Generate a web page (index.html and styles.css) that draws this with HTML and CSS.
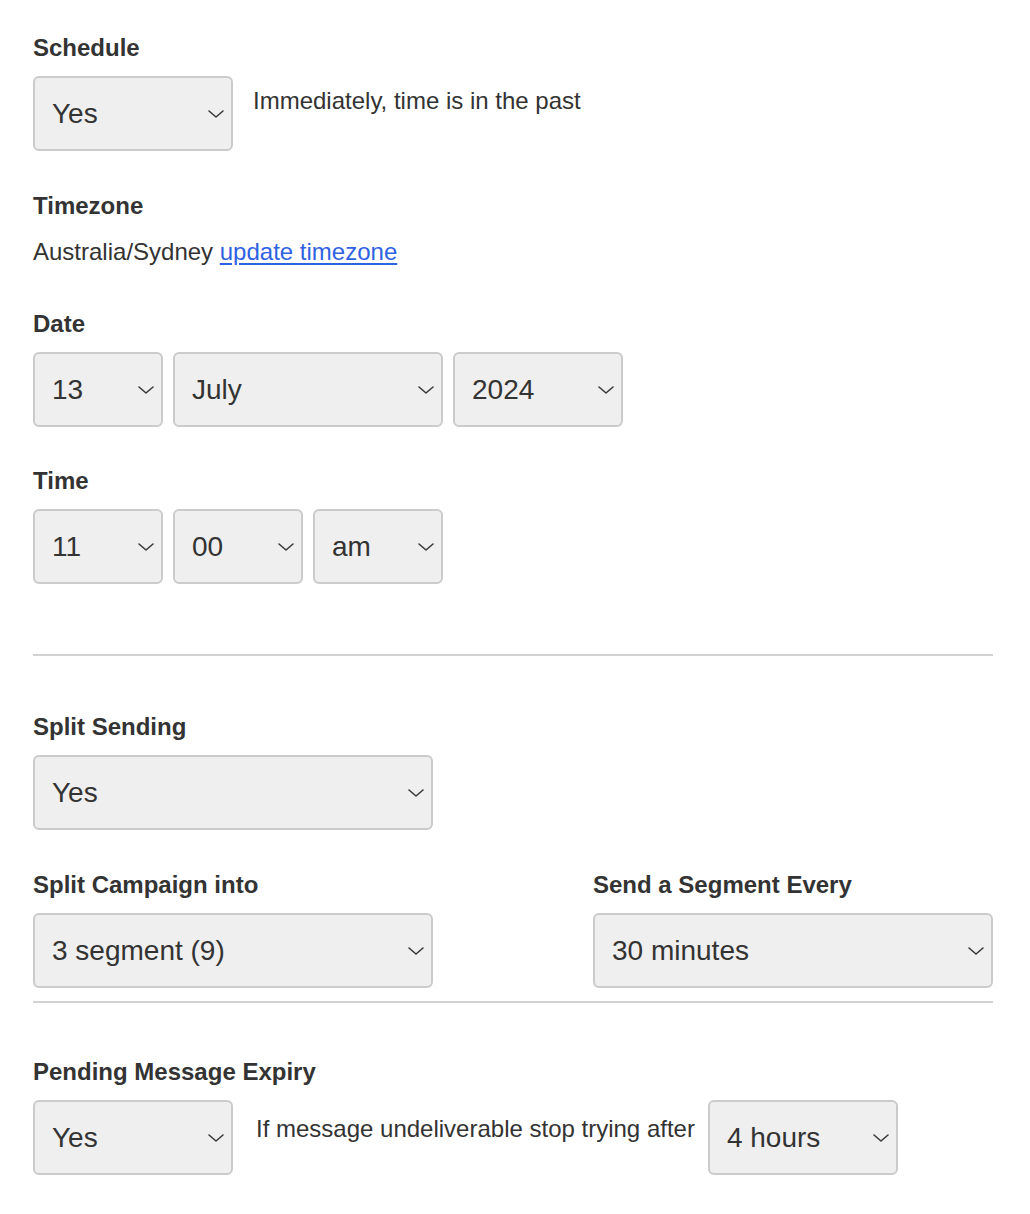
FILE: index.html
```html
<!DOCTYPE html>
<html lang="en">
<head>
<meta charset="utf-8">
<title>Schedule</title>
<link rel="stylesheet" href="styles.css">
</head>
<body>
<main class="form">
  <section class="field field--first">
    <label class="label" for="schedule">Schedule</label>
    <div class="row">
      <div class="select-wrap w200">
        <select id="schedule" class="select"><option>Yes</option><option>No</option></select>
        <svg class="chev" viewBox="0 0 16 8" aria-hidden="true"><path d="M1 1 L8 7 L15 1"/></svg>
      </div>
      <span class="note note--schedule">Immediately, time is in the past</span>
    </div>
  </section>

  <section class="field field--tz">
    <div class="label">Timezone</div>
    <p class="tz">Australia/Sydney <a href="#" class="link">update timezone</a></p>
  </section>

  <section class="field field--date">
    <div class="label">Date</div>
    <div class="row row--gap">
      <div class="select-wrap w130">
        <select class="select"><option>13</option></select>
        <svg class="chev" viewBox="0 0 16 8" aria-hidden="true"><path d="M1 1 L8 7 L15 1"/></svg>
      </div>
      <div class="select-wrap w270">
        <select class="select"><option>July</option></select>
        <svg class="chev" viewBox="0 0 16 8" aria-hidden="true"><path d="M1 1 L8 7 L15 1"/></svg>
      </div>
      <div class="select-wrap w170">
        <select class="select"><option>2024</option></select>
        <svg class="chev" viewBox="0 0 16 8" aria-hidden="true"><path d="M1 1 L8 7 L15 1"/></svg>
      </div>
    </div>
  </section>

  <section class="field field--time">
    <div class="label">Time</div>
    <div class="row row--gap">
      <div class="select-wrap w130">
        <select class="select"><option>11</option></select>
        <svg class="chev" viewBox="0 0 16 8" aria-hidden="true"><path d="M1 1 L8 7 L15 1"/></svg>
      </div>
      <div class="select-wrap w130">
        <select class="select"><option>00</option></select>
        <svg class="chev" viewBox="0 0 16 8" aria-hidden="true"><path d="M1 1 L8 7 L15 1"/></svg>
      </div>
      <div class="select-wrap w130">
        <select class="select"><option>am</option></select>
        <svg class="chev" viewBox="0 0 16 8" aria-hidden="true"><path d="M1 1 L8 7 L15 1"/></svg>
      </div>
    </div>
  </section>

  <hr class="divider divider--one">

  <section class="field field--split">
    <div class="label">Split Sending</div>
    <div class="select-wrap w400">
      <select class="select"><option>Yes</option></select>
      <svg class="chev" viewBox="0 0 16 8" aria-hidden="true"><path d="M1 1 L8 7 L15 1"/></svg>
    </div>
  </section>

  <section class="grid2">
    <div class="col">
      <div class="label">Split Campaign into</div>
      <div class="select-wrap w400">
        <select class="select"><option>3 segment (9)</option></select>
        <svg class="chev" viewBox="0 0 16 8" aria-hidden="true"><path d="M1 1 L8 7 L15 1"/></svg>
      </div>
    </div>
    <div class="col">
      <div class="label">Send a Segment Every</div>
      <div class="select-wrap w400">
        <select class="select"><option>30 minutes</option></select>
        <svg class="chev" viewBox="0 0 16 8" aria-hidden="true"><path d="M1 1 L8 7 L15 1"/></svg>
      </div>
    </div>
  </section>

  <hr class="divider divider--two">

  <section class="field field--expiry">
    <div class="label">Pending Message Expiry</div>
    <div class="row">
      <div class="select-wrap w200">
        <select class="select"><option>Yes</option></select>
        <svg class="chev" viewBox="0 0 16 8" aria-hidden="true"><path d="M1 1 L8 7 L15 1"/></svg>
      </div>
      <span class="note note--expiry">If message undeliverable stop trying after</span>
      <div class="select-wrap w190">
        <select class="select"><option>4 hours</option></select>
        <svg class="chev" viewBox="0 0 16 8" aria-hidden="true"><path d="M1 1 L8 7 L15 1"/></svg>
      </div>
    </div>
  </section>
</main>
</body>
</html>
```

FILE: styles.css
```css
* { box-sizing: border-box; }

html, body {
  margin: 0;
  padding: 0;
  background: #ffffff;
}

body {
  font-family: "Liberation Sans", Arial, Helvetica, sans-serif;
  color: #333333;
  font-size: 24px;
  line-height: 28px;
}

.form {
  width: 960px;
  margin-left: 33px;
  padding-top: 34px;
  padding-bottom: 40px;
}

.label {
  display: block;
  font-weight: bold;
  font-size: 24px;
  line-height: 28px;
  color: #333333;
  margin-bottom: 14px;
}

.field--tz { margin-top: 41px; }
.field--tz .label { margin-bottom: 18px; }
.field--date { margin-top: 44px; }
.field--time { margin-top: 40px; }
.field--split { margin-top: 57px; }
.field--expiry { margin-top: 55px; }

.tz {
  margin: 0;
  font-size: 24px;
  line-height: 28px;
}

.link {
  color: #2f62e2;
  text-decoration: underline;
  text-underline-offset: 3px;
}

.row {
  display: flex;
  align-items: flex-start;
}

.row--gap { gap: 10px; }

.select-wrap {
  position: relative;
  flex: none;
  height: 75px;
}

.w130 { width: 130px; }
.w170 { width: 170px; }
.w190 { width: 190px; }
.w200 { width: 200px; }
.w270 { width: 270px; }
.w400 { width: 400px; }

.select {
  -webkit-appearance: none;
  appearance: none;
  display: block;
  width: 100%;
  height: 75px;
  margin: 0;
  border: 2px solid #cbcbcb;
  border-radius: 6px;
  background: #efefef;
  color: #333333;
  font-family: "Liberation Sans", Arial, Helvetica, sans-serif;
  font-size: 28px;
  line-height: 32px;
  padding: 0 36px 0 17px;
  outline: none;
}

.chev {
  position: absolute;
  right: 9px;
  top: 50%;
  width: 16px;
  height: 8px;
  margin-top: -4px;
  pointer-events: none;
  fill: none;
  stroke: #3a3a3a;
  stroke-width: 1.6;
  stroke-linecap: round;
  stroke-linejoin: round;
}

.note {
  font-size: 24px;
  line-height: 28px;
  color: #333333;
  white-space: nowrap;
}

.note--schedule {
  margin-left: 20px;
  margin-top: 11px;
}

.note--expiry {
  margin-left: 23px;
  margin-right: 13px;
  margin-top: 15px;
}

.divider {
  border: 0;
  height: 2px;
  background: #d2d2d2;
  margin: 0;
  width: 960px;
}

.divider--one { margin-top: 70px; }
.divider--two { margin-top: 13px; }

.grid2 {
  display: grid;
  grid-template-columns: 400px 400px;
  column-gap: 160px;
  margin-top: 41px;
}
```
